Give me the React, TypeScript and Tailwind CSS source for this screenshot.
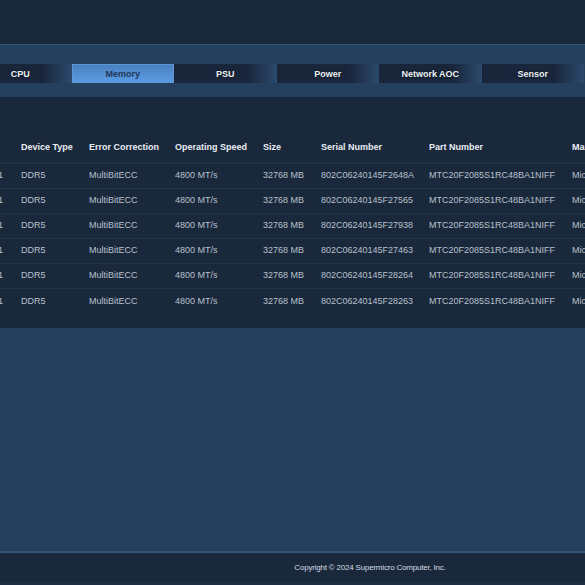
import React from "react";

const tabs = ["CPU", "Memory", "PSU", "Power", "Network AOC", "Sensor"];

const rows = [
  ["P1-DIMMA1", "802C06240145F2648A"],
  ["P1-DIMMB1", "802C06240145F27565"],
  ["P1-DIMMC1", "802C06240145F27938"],
  ["P1-DIMMD1", "802C06240145F27463"],
  ["P1-DIMME1", "802C06240145F28264"],
  ["P1-DIMMF1", "802C06240145F28263"],
];

export default function App() {
  return (
    <div
      className="w-[585px] h-[585px] overflow-hidden flex flex-col bg-[#1a283b]"
      style={{ fontFamily: '"Liberation Sans", Arial, sans-serif' }}
    >
      {/* top dark area */}
      <div className="h-[44px] shrink-0 bg-[#1a283b]" />
      {/* tab band */}
      <div className="h-[53px] shrink-0 bg-[#25405e] border-t border-[#33557c] pt-[19px]">
        <div className="flex ml-[-31px] h-[19px]">
          {tabs.map((t) =>
            t === "Memory" ? (
              <div
                key={t}
                className="w-[102.5px] shrink-0 h-[19px] flex items-center justify-center pt-[2px] text-[9px] font-bold text-[#20395a] bg-gradient-to-b from-[#4b80c2] to-[#5b9be2] border border-[#5f96d4]"
              >
                {t}
              </div>
            ) : (
              <div
                key={t}
                className="w-[102.5px] shrink-0 h-[19px] flex items-center justify-center pt-[2px] text-[9px] font-bold text-[#eef2f7] bg-gradient-to-r from-[#18253a] via-[#18253a] via-[70%] to-[#2c4a6d] [text-shadow:0_0_2px_rgba(0,0,0,0.6)]"
              >
                {t}
              </div>
            )
          )}
        </div>
      </div>
      {/* table panel */}
      <div className="shrink-0 bg-[#1a283b] pt-[37px] pb-[14px] overflow-hidden">
        <div className="ml-[-59px] w-[900px]">
          <div className="flex h-[30px] items-center border-b-2 border-[#1f3147] text-[9px] font-bold text-[#e8edf4]">
            <div className="w-[80px] shrink-0 text-right pr-[18px]"></div>
            <div className="w-[68px] shrink-0">Device Type</div>
            <div className="w-[86px] shrink-0">Error Correction</div>
            <div className="w-[88px] shrink-0">Operating Speed</div>
            <div className="w-[58px] shrink-0">Size</div>
            <div className="w-[108px] shrink-0">Serial Number</div>
            <div className="w-[143px] shrink-0">Part Number</div>
            <div className="w-[120px] shrink-0">Manufacturer</div>
          </div>
          {rows.map(([name, serial], i) => (
            <div
              key={serial}
              className={`flex h-[25px] items-center text-[9px] text-[#b8c1cd] ${
                i < rows.length - 1 ? "border-b border-[#223349]" : ""
              }`}
            >
              <div className="w-[80px] shrink-0 text-right pr-[18px]">{name}</div>
              <div className="w-[68px] shrink-0">DDR5</div>
              <div className="w-[86px] shrink-0">MultiBitECC</div>
              <div className="w-[88px] shrink-0">4800 MT/s</div>
              <div className="w-[58px] shrink-0">32768 MB</div>
              <div className="w-[108px] shrink-0">{serial}</div>
              <div className="w-[143px] shrink-0">MTC20F2085S1RC48BA1NIFF</div>
              <div className="w-[120px] shrink-0">Micron Technology</div>
            </div>
          ))}
        </div>
      </div>
      {/* lighter body area */}
      <div className="flex-1 bg-[#25405e]" />
      {/* footer */}
      <div className="h-[31px] shrink-0 bg-[#1a283b] border-t-2 border-[#2f5478] flex items-center justify-center pl-[155px]">
        <span className="text-[8px] text-[#d3dae4] tracking-[-0.2px]">
          Copyright © 2024 Supermicro Computer, Inc.
        </span>
      </div>
      <div className="h-[3px] shrink-0 bg-[#1e2d44]" />
    </div>
  );
}
